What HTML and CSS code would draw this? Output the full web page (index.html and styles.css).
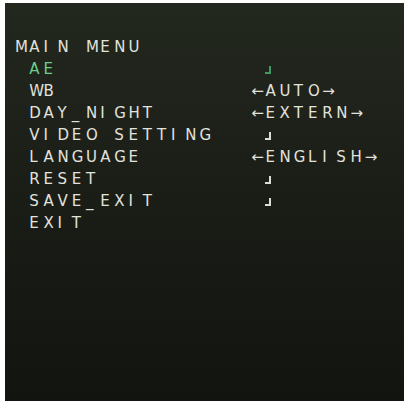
FILE: index.html
```html
<!DOCTYPE html>
<html lang="en">
<head>
  <meta charset="UTF-8">
  <meta name="viewport" content="width=device-width, initial-scale=1.0">
  <title>Camera OSD - Main Menu</title>
  <link rel="stylesheet" href="styles.css">
</head>
<body>

  <!-- On-screen display panel -->
  <div class="screen">
    <div class="title cells">MAIN MENU</div>

    <ul class="menu">
      <li class="item active">
        <span class="label cells">AE</span>
        <span class="value"><span class="cell"></span><i class="enter"></i></span>
      </li>
      <li class="item">
        <span class="label cells">WB</span>
        <span class="value cells">←AUTO→</span>
      </li>
      <li class="item">
        <span class="label cells">DAY_NIGHT</span>
        <span class="value cells">←EXTERN→</span>
      </li>
      <li class="item">
        <span class="label cells">VIDEO SETTING</span>
        <span class="value"><span class="cell"></span><i class="enter"></i></span>
      </li>
      <li class="item">
        <span class="label cells">LANGUAGE</span>
        <span class="value cells">←ENGLISH→</span>
      </li>
      <li class="item">
        <span class="label cells">RESET</span>
        <span class="value"><span class="cell"></span><i class="enter"></i></span>
      </li>
      <li class="item">
        <span class="label cells">SAVE_EXIT</span>
        <span class="value"><span class="cell"></span><i class="enter"></i></span>
      </li>
      <li class="item">
        <span class="label cells">EXIT</span>
      </li>
    </ul>
  </div>

  <script>
    // OSD text sits on a fixed character grid: one cell per character
    document.querySelectorAll(".cells").forEach((el) => {
      const chars = Array.from(el.textContent.trim());
      el.innerHTML = chars
        .map((c) => `<span class="cell">${c === " " ? "&nbsp;" : c}</span>`)
        .join("");
    });
  </script>

</body>
</html>
```

FILE: styles.css
```css
* {
  box-sizing: border-box;
  margin: 0;
  padding: 0;
}

body {
  background-color: #fff;
  font-family: "DejaVu Sans", sans-serif;
}

/* The dark monitor area */
.screen {
  margin: 3px 4px 0 5px;
  height: 398px;
  padding: 33px 0 0 9px;
  background: linear-gradient(180deg, #23281f 0%, #1b1e17 45%, #121410 100%);
  color: #e2e2de;
  font-size: 15px;
  line-height: 22px;
}

/* Character cells */
.cell {
  display: inline-block;
  width: 14.2px;
  padding-left: 1px;
  white-space: pre;
}

.cells {
  display: flex;
}

.menu {
  list-style: none;
  padding-left: 14.2px;
}

.item {
  display: grid;
  grid-template-columns: 222px auto;
  height: 22px;
}

.item.active {
  color: #69cf8c;
}

.value {
  display: flex;
  align-items: center;
}

/* Small corner mark for "enter submenu" */
.enter {
  display: inline-block;
  width: 6px;
  height: 8px;
  margin: 2px 0 0 1px;
  border-right: 2px solid #dcdcd8;
  border-bottom: 2px solid #dcdcd8;
}

.item.active .enter {
  border-color: #3f9a62;
}
```
